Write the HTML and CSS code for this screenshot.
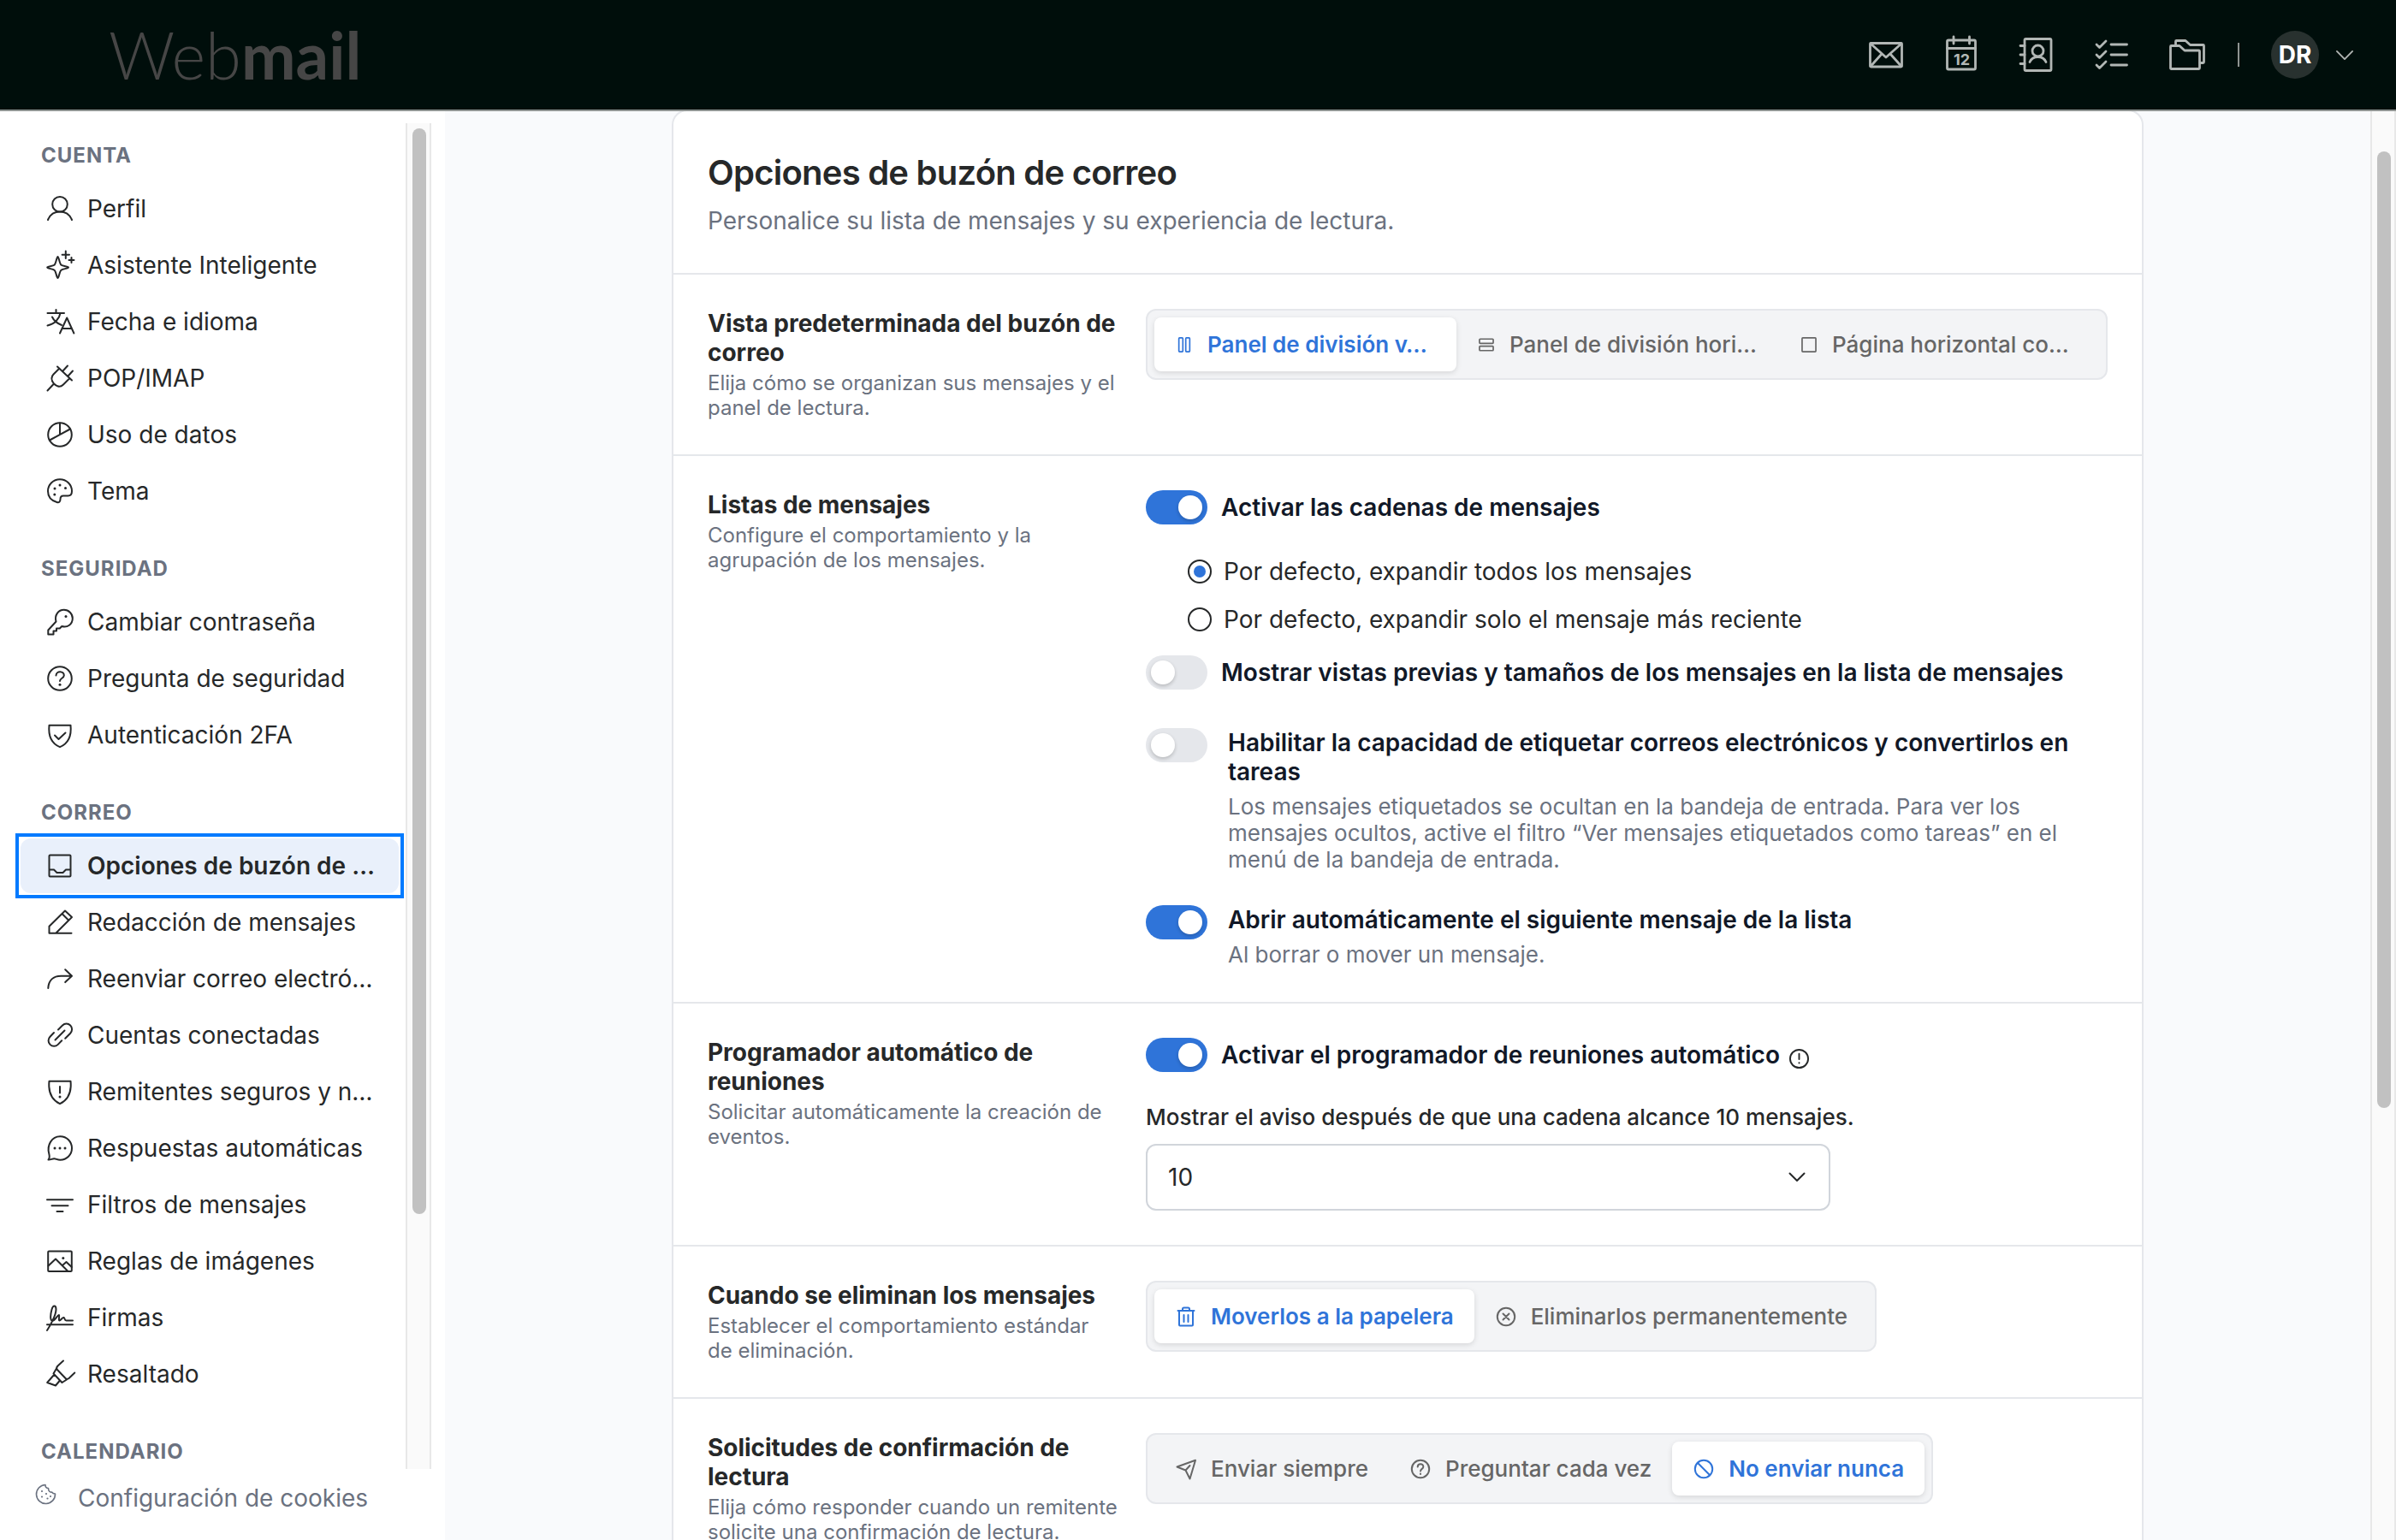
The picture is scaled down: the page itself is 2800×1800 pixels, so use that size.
FILE: index.html
```html
<!DOCTYPE html>
<html lang="es">
<head>
    <meta charset="UTF-8">
    <meta name="viewport" content="width=device-width, initial-scale=1.0">
    <title>Opciones de buzón de correo - Webmail</title>
    <link rel="stylesheet" href="styles.css">
</head>
<body>
    <header class="topbar">
        <div class="logo"><span class="logo-thin">Web</span><span class="logo-bold">mail</span></div>
        <nav class="topnav">
            <svg class="nav-icon" viewBox="0 0 44 44"><rect x="3.5" y="8.5" width="37" height="27.5" rx="1"/><path d="M4 9l18 16L40 9M4 35.5l13-14.500M40 35.500l-13-14.500"/></svg>
            <svg class="nav-icon" viewBox="0 0 44 44"><rect x="5.500" y="5" width="33" height="34" rx="1.500"/><path d="M5.500 14.500h33M13 1v8M31.500 1v8"/><text class="cal-day" x="22.500" y="34">12</text></svg>
            <svg class="nav-icon" viewBox="0 0 44 44"><rect x="8" y="3.500" width="31" height="37" rx="1.500"/><path d="M3 11.500h5M3 22h5M3 32.500h5M14 30.500c2-4.500 5.500-6 9.500-6s7.500 1.500 9.500 6"/><circle cx="23.500" cy="17.500" r="6.500"/></svg>
            <svg class="nav-icon" viewBox="0 0 44 44"><path d="M4 10l3.500 3.500L15 6M4 22l3.500 3.500L15 18M4 34l3.500 3.500L15 30M21 10h18.500M21 22h18.500M21 34h18.500"/></svg>
            <svg class="nav-icon" viewBox="0 0 44 44"><path d="M2.500 37.500V12.500q0-1 1-1H13l6 5.500h16.500q1 0 1 1v19.500q0 1-1 1h-32q-1 0-1-1z"/><path d="M8.500 11V6.500q0-1 1-1H20l5.500 5H40.500q1 0 1 1V30.500q0 1-1 1H37"/></svg>
            <span class="nav-divider"></span>
            <span class="avatar">DR</span>
            <svg class="nav-chevron" viewBox="0 0 22 12"><path d="M1 1l10 10L21 1"/></svg>
        </nav>
    </header>

    <div class="layout">
        <aside class="sidebar">
            <div class="sidebar-scroll">
                <div class="menu">
                    <section class="menu-group">
                        <h2 class="menu-title">CUENTA</h2>
                        <a class="menu-item"><svg viewBox="0 0 32 32"><circle cx="16" cy="10.800" r="8.800"/><path d="M2 29c2.500-6 7.500-9.400 14-9.400S27.500 23 30 29"/></svg><span>Perfil</span></a>
                        <a class="menu-item"><svg viewBox="0 0 32 32"><path d="M13.500 6c1.200 0 2 8.200 4 9.800s8.500 1.200 8.500 2.700-6.500 1.600-8.500 3.200-2.800 9.300-4 9.300-2-7.700-4-9.300S1.200 20 1.200 18.500s6.300-1.100 8.300-2.700 2.800-9.800 4-9.800zM22.800-.5v8.400M18.600 3.700H27M29.500 7v6M26.500 10h6"/></svg><span>Asistente Inteligente</span></a>
                        <a class="menu-item"><svg viewBox="0 0 32 32"><path d="M1.500 6h19.500M11.500 2v4M16.500 6c-1 6-6 12.500-15 14.500M7 10.500c2 4.500 6 7.500 11 9.500M16 29.500l8.200-18 8.200 18M19 24h10.500"/></svg><span>Fecha e idioma</span></a>
                        <a class="menu-item"><svg viewBox="0 0 32 32"><path d="M13 2.500l17 16M15 5l-6.500 6.500c-4.500 4.500-1.500 8.500.5 11 2.500 2.500 6.500 5.500 11 1l7-7M9 22.500L1.500 30.500M20 7l5-5.500M26 13l5-5.500"/></svg><span>POP/IMAP</span></a>
                        <a class="menu-item"><svg viewBox="0 0 32 32"><circle cx="16" cy="16" r="13.800"/><path d="M16 2.500V16M4 22.500l24-13"/></svg><span>Uso de datos</span></a>
                        <a class="menu-item"><svg viewBox="0 0 32 32"><path d="M12.500 29C5.500 27 2 22 2 16 2 8.300 8.300 2.200 16 2.200S30 8.300 30 16c0 3.500-1 5.500-4.500 5.500H20c-3 0-3.500 2-3.500 4s-1 4.300-4 3.500z"/><path class="dots" d="M10 13h.01M16 9h.01M22.500 12.500h.01M9.800 20h.01"/></svg><span>Tema</span></a>
                    </section>
                    <section class="menu-group">
                        <h2 class="menu-title">SEGURIDAD</h2>
                        <a class="menu-item"><svg viewBox="0 0 32 32"><path d="M2.300 25.500L11.500 15.500C9.500 8 14 1.800 20.800 1.800a10 10 0 0 1 10 10c0 7-6 11-12.500 9.200l-2.500 2.500H12v3H8.500v4H2.300z"/><path class="dots" d="M23 9.500h.01"/></svg><span>Cambiar contraseña</span></a>
                        <a class="menu-item"><svg viewBox="0 0 32 32"><circle cx="16" cy="16" r="13.800"/><path d="M11.500 12.500c.3-6 9.500-5.500 9.300 0-.1 3.500-4.800 3-4.800 6.500"/><path class="dots" d="M16 23.300h.01"/></svg><span>Pregunta de seguridad</span></a>
                        <a class="menu-item"><svg viewBox="0 0 32 32"><path d="M3.500 4.700h25c.8 8 .8 20-12.500 25.500C2.700 24.700 2.700 12.700 3.500 4.700zM10 16.500l4.500 4.500 8-7.500"/></svg><span>Autenticación 2FA</span></a>
                    </section>
                    <section class="menu-group">
                        <h2 class="menu-title">CORREO</h2>
                        <a class="menu-item active"><svg viewBox="0 0 32 32"><path d="M3.500 4.500q0-1 1-1h23q1 0 1 1v23q0 1-1 1h-23q-1 0-1-1zM3.500 20.500H9l3.500 3.500h7l3.500-3.500h5.500"/></svg><span>Opciones de buzón de …</span></a>
                        <a class="menu-item"><svg viewBox="0 0 32 32"><path d="M29.500 28.700H3.500v-8L22 2.500 30 10 11.500 28.500M18.500 6l7.800 7.800"/></svg><span>Redacción de mensajes</span></a>
                        <a class="menu-item"><svg viewBox="0 0 32 32"><path d="M2.300 27c.5-9 6-14.300 15-14.300h12.500M22.200 5.300l7.800 7.400-7.800 7.400"/></svg><span>Reenviar correo electró…</span></a>
                        <a class="menu-item"><svg viewBox="0 0 32 32"><path d="M10.500 21.500l11-11M14 9.500l5-5a6.500 6.500 0 0 1 9.200 9.200l-6 6M9 13l-4.500 4.700a6.500 6.500 0 0 0 9.200 9.200l4.500-4.700"/></svg><span>Cuentas conectadas</span></a>
                        <a class="menu-item"><svg viewBox="0 0 32 32"><path d="M3.500 3.700h25c.8 8 .8 20-12.500 26.500C2.700 23.700 2.700 11.700 3.500 3.700zM16 10v7.500"/><path class="dots" d="M16 22h.01"/></svg><span>Remitentes seguros y n…</span></a>
                        <a class="menu-item"><svg viewBox="0 0 32 32"><path d="M2.500 29.500c2-2 1.500-4 .8-7C.5 12.500 6.500 2.200 16.300 2.200 24 2.200 30 8.300 30 16s-6 13.700-13.700 13.700c-3.500 0-4.800-1.500-7-1.500s-4.300 1.600-6.800 1.300z"/><path class="dots" d="M10 16h.01M16 16h.01M22 16h.01"/></svg><span>Respuestas automáticas</span></a>
                        <a class="menu-item"><svg viewBox="0 0 32 32"><path d="M1 10.300h30M6.500 17.300h19M12.500 24h7"/></svg><span>Filtros de mensajes</span></a>
                        <a class="menu-item"><svg viewBox="0 0 32 32"><rect x="2.200" y="4.500" width="27.600" height="23.500" rx="1"/><path d="M2.500 21.500l8.500-8 14 14M19 21l4.500-4 6.300 6"/><path class="dots" d="M19.800 12.500h.01"/></svg><span>Reglas de imágenes</span></a>
                        <a class="menu-item"><svg viewBox="0 0 32 32"><path d="M1 24.300h30M1 31C5 25 11.500 13 11.500 6.500c0-5-3.500-5.500-5 0S4 20 7.500 19.500c3 0 5-6 7.500-6.500.8 1-1 6.500.5 6.500S19 15.500 20.500 16s.5 3.500 3 3.500H31"/></svg><span>Firmas</span></a>
                        <a class="menu-item"><svg viewBox="0 0 32 32"><path d="M20 .5L13.500 6.500Q11.500 8.500 12.500 10.500L23 21.500q2 .8 3.500-.5L33.300 14.500M12 9.500L8.500 15.500 18.500 26 24 22.500M9.500 16.500L1.200 26l9.800 3.500L16 23.500"/></svg><span>Resaltado</span></a>
                    </section>
                    <section class="menu-group">
                        <h2 class="menu-title">CALENDARIO</h2>
                    </section>
                </div>
                <div class="scroll-track"><div class="scroll-thumb"></div></div>
            </div>
            <div class="cookies">
                <svg viewBox="0 0 24 24"><path d="M11 1.500c0 3 1.500 4 3.500 4 0 3.500 2 5 4 4.500 1 1.500 2.500 2 4 2a11 11 0 1 1-11.500-10.500z"/><path class="dots" d="M7 9h.01M12 12h.01M7 15.500h.01M13.500 17.500h.01M17 15h.01"/></svg>
                <span>Configuración de cookies</span>
            </div>
        </aside>

        <main class="content">
            <div class="card">
                <div class="card-header">
                    <h1>Opciones de buzón de correo</h1>
                    <p>Personalice su lista de mensajes y su experiencia de lectura.</p>
                </div>

                <section class="setting">
                    <div class="setting-info">
                        <h3>Vista predeterminada del buzón de correo</h3>
                        <p>Elija cómo se organizan sus mensajes y el panel de lectura.</p>
                    </div>
                    <div class="setting-body">
                        <div class="segmented view-mode">
                            <button class="segment selected seg-vertical"><svg viewBox="0 0 26 26"><rect x="5.500" y="3.500" width="5.500" height="19" rx="1"/><rect x="15" y="3.500" width="5.500" height="19" rx="1"/></svg><span>Panel de división v…</span></button>
                            <button class="segment seg-horizontal"><svg viewBox="0 0 26 26"><rect x="3.500" y="5" width="19" height="6" rx="1"/><rect x="3.500" y="15" width="19" height="6" rx="1"/></svg><span>Panel de división hori…</span></button>
                            <button class="segment seg-page"><svg viewBox="0 0 26 26"><rect x="3.500" y="3.500" width="19" height="19" rx="1"/></svg><span>Página horizontal co…</span></button>
                        </div>
                    </div>
                </section>

                <section class="setting">
                    <div class="setting-info">
                        <h3>Listas de mensajes</h3>
                        <p>Configure el comportamiento y la agrupación de los mensajes.</p>
                    </div>
                    <div class="setting-body">
                        <div class="toggle-row">
                            <span class="toggle on"></span>
                            <span class="toggle-label">Activar las cadenas de mensajes</span>
                        </div>
                        <div class="radio-list">
                            <div class="radio-row"><span class="radio checked"></span><span>Por defecto, expandir todos los mensajes</span></div>
                            <div class="radio-row"><span class="radio"></span><span>Por defecto, expandir solo el mensaje más reciente</span></div>
                        </div>
                        <div class="toggle-row">
                            <span class="toggle"></span>
                            <span class="toggle-label">Mostrar vistas previas y tamaños de los mensajes en la lista de mensajes</span>
                        </div>
                        <div class="toggle-row detailed tags">
                            <span class="toggle"></span>
                            <div class="toggle-text">
                                <div class="toggle-label">Habilitar la capacidad de etiquetar correos electrónicos y convertirlos en tareas</div>
                                <p>Los mensajes etiquetados se ocultan en la bandeja de entrada. Para ver los mensajes ocultos, active el filtro “Ver mensajes etiquetados como tareas” en el menú de la bandeja de entrada.</p>
                            </div>
                        </div>
                        <div class="toggle-row detailed">
                            <span class="toggle on"></span>
                            <div class="toggle-text">
                                <div class="toggle-label">Abrir automáticamente el siguiente mensaje de la lista</div>
                                <p>Al borrar o mover un mensaje.</p>
                            </div>
                        </div>
                    </div>
                </section>

                <section class="setting">
                    <div class="setting-info">
                        <h3>Programador automático de reuniones</h3>
                        <p>Solicitar automáticamente la creación de eventos.</p>
                    </div>
                    <div class="setting-body">
                        <div class="toggle-row">
                            <span class="toggle on"></span>
                            <span class="toggle-label">Activar el programador de reuniones automático</span>
                            <svg class="info-icon" viewBox="0 0 24 24"><circle cx="12" cy="12" r="11"/><path d="M12 6v6.500M12 16.800v.4"/></svg>
                        </div>
                        <div class="field-label">Mostrar el aviso después de que una cadena alcance 10 mensajes.</div>
                        <div class="select-box">
                            <span>10</span>
                            <svg viewBox="0 0 20 12"><path d="M1.500 1.500l8.500 8.500 8.500-8.500"/></svg>
                        </div>
                    </div>
                </section>

                <section class="setting">
                    <div class="setting-info">
                        <h3>Cuando se eliminan los mensajes</h3>
                        <p>Establecer el comportamiento estándar de eliminación.</p>
                    </div>
                    <div class="setting-body">
                        <div class="segmented">
                            <button class="segment selected"><svg viewBox="0 0 26 26"><path d="M3.500 6h19M9 6V4q0-1.500 1.500-1.500h5Q17 2.500 17 4v2M5 6v16.500q0 1 1 1h14q1 0 1-1V6M10.500 11v8M15.500 11v8"/></svg><span>Moverlos a la papelera</span></button>
                            <button class="segment"><svg viewBox="0 0 26 26"><circle cx="13" cy="13" r="10.200"/><path d="M9.500 9.500l7 7M16.500 9.500l-7 7"/></svg><span>Eliminarlos permanentemente</span></button>
                        </div>
                    </div>
                </section>

                <section class="setting">
                    <div class="setting-info">
                        <h3>Solicitudes de confirmación de lectura</h3>
                        <p>Elija cómo responder cuando un remitente solicite una confirmación de lectura.</p>
                    </div>
                    <div class="setting-body">
                        <div class="segmented">
                            <button class="segment"><svg viewBox="0 0 26 26"><path d="M2.500 10.500L24 2.800 17.500 24.500 12.500 14.500zM12.500 14.500L17.500 9"/></svg><span>Enviar siempre</span></button>
                            <button class="segment"><svg viewBox="0 0 26 26"><circle cx="13" cy="13" r="10.200"/><path d="M9.700 10.500c.2-4.500 6.800-4.200 6.600 0-.1 2.500-3.300 2.300-3.300 5M13 18.500v.4"/></svg><span>Preguntar cada vez</span></button>
                            <button class="segment selected"><svg viewBox="0 0 26 26"><circle cx="13" cy="13" r="10.200"/><path d="M5.800 5.800l14.400 14.400"/></svg><span>No enviar nunca</span></button>
                        </div>
                    </div>
                </section>
            </div>
        </main>
        <div class="page-track"><div class="page-thumb"></div></div>
    </div>
</body>
</html>
```
FILE: styles.css
```css
* {
    margin: 0;
    padding: 0;
    box-sizing: border-box;
}

body {
    width: 2800px;
    height: 1800px;
    overflow: hidden;
    font-family: Inter, "Liberation Sans", sans-serif;
    font-size: 28px;
    color: #262829;
    background: #f9fafc;
    display: flex;
    flex-direction: column;
}

svg {
    fill: none;
    stroke: currentColor;
    stroke-width: 2;
    stroke-linecap: round;
    stroke-linejoin: round;
    flex-shrink: 0;
    overflow: visible;
}

svg .dots {
    stroke-width: 3;
}

/* Top bar */
.topbar {
    height: 130px;
    flex-shrink: 0;
    background: #000e0b;
    border-bottom: 2px solid #8f9492;
    display: flex;
    align-items: center;
    justify-content: space-between;
    padding: 0 50px 0 127px;
}

.logo {
    font-family: Lato, "Open Sans", sans-serif;
    font-size: 76px;
    line-height: 90px;
    color: #464646;
    white-space: nowrap;
}

.logo-thin {
    font-weight: 300;
}

.logo-bold {
    font-weight: 700;
}

.topnav {
    display: flex;
    align-items: center;
    color: #b2b7b5;
}

.nav-icon {
    width: 44px;
    height: 44px;
    margin-right: 44px;
    stroke-width: 2.8;
}

.cal-day {
    font-size: 18px;
    font-weight: 700;
    text-anchor: middle;
    fill: currentColor;
    stroke: none;
}

.nav-divider {
    width: 2px;
    height: 28px;
    background: #8f9492;
    margin-right: 37px;
    margin-left: -7px;
}

.avatar {
    width: 56px;
    height: 56px;
    border-radius: 50%;
    background: #28312f;
    color: #fff;
    font-weight: 700;
    display: flex;
    align-items: center;
    justify-content: center;
    margin-right: 20px;
}

.nav-chevron {
    width: 20px;
    height: 11px;
}

/* Sidebar */
.layout {
    flex: 1;
    min-height: 0;
    display: flex;
}

.sidebar {
    width: 520px;
    flex-shrink: 0;
    background: #fff;
    display: flex;
    flex-direction: column;
}

.sidebar-scroll {
    height: 1587px;
    padding-top: 14px;
    display: flex;
}

.menu {
    width: 474px;
    padding: 20px 8px 0 24px;
    height: 1573px;
    overflow: hidden;
}

.menu-group {
    display: flex;
    flex-direction: column;
    gap: 2px;
    margin-bottom: 41px;
}

.menu-title {
    font-size: 24px;
    font-weight: 700;
    line-height: 36px;
    letter-spacing: 1px;
    color: #6b7280;
    padding-left: 24px;
    margin-bottom: 10px;
}

.menu-item {
    position: relative;
    height: 64px;
    flex-shrink: 0;
    display: flex;
    align-items: center;
    gap: 16px;
    padding: 0 30px;
    white-space: nowrap;
}

.menu-item svg {
    width: 32px;
    height: 32px;
}

/* square focus ring around a rounded highlight */
.menu-item.active {
    z-index: 0;
    font-weight: 600;
    outline: 4px solid #007aff;
    outline-offset: 2px;
}

.menu-item.active::before {
    content: '';
    position: absolute;
    inset: 0;
    z-index: -1;
    border-radius: 12px;
    background: #e9f0fb;
}

.scroll-track {
    width: 30px;
    background: #fafafa;
    border: solid #e8e8e8;
    border-width: 0 2px;
    padding: 6px 4px 0 6px;
}

.scroll-thumb {
    height: 1269px;
    border-radius: 8px;
    background: #c1c1c1;
}

.cookies {
    display: flex;
    padding: 17px 0 0 42px;
    gap: 25px;
    color: #6b7280;
    line-height: 34px;
}

.cookies svg {
    width: 24px;
    height: 24px;
    stroke-width: 1.6;
}

.cookies .dots {
    stroke-width: 2.2;
}

/* Settings card */
.content {
    flex: 1;
    overflow: hidden;
    display: flex;
    justify-content: center;
    align-items: flex-start;
}

.card {
    width: 1720px;
    margin-top: -2px;
    background: #fff;
    border: 2px solid #e5e7eb;
    border-radius: 18px;
}

.card-header {
    height: 191px;
    padding: 48px 40px 0;
    border-bottom: 2px solid #e5e7eb;
}

.card-header h1 {
    font-size: 40px;
    font-weight: 600;
    line-height: 48px;
    letter-spacing: -0.76px;
    margin-bottom: 15px;
}

.card-header p {
    line-height: 34px;
    color: #6b7280;
}

.setting {
    display: grid;
    grid-template-columns: 480px 1124px;
    gap: 32px;
    padding: 40px;
    border-bottom: 2px solid #e5e7eb;
}

.setting:last-child {
    border-bottom: none;
}

.setting-info h3 {
    font-size: 28px;
    font-weight: 700;
    line-height: 34px;
    letter-spacing: -0.02px;
}

.setting-info p {
    margin-top: 4px;
    font-size: 24px;
    line-height: 29px;
    color: #6b7280;
}

.setting-info {
    min-height: 96px;
}

.segmented {
    display: inline-flex;
    vertical-align: top;
    height: 83px;
    padding: 8px;
    background: #f3f4f6;
    border: 2px solid #e5e7eb;
    border-radius: 12px;
}

.segment {
    display: flex;
    align-items: center;
    gap: 16px;
    padding: 0 24px;
    border: none;
    border-radius: 8px;
    background: none;
    font-family: inherit;
    font-size: 26px;
    font-weight: 500;
    color: #666;
    white-space: nowrap;
}

.segment svg {
    width: 26px;
    height: 26px;
}

.segment.selected {
    background: #fff;
    color: #2f74d9;
    font-weight: 600;
    box-shadow: 0 2px 6px rgba(0, 0, 0, 0.12);
}

.view-mode svg {
    width: 22px;
    height: 22px;
}

.seg-vertical {
    width: 353px;
}

.seg-horizontal {
    width: 377px;
}

.seg-page {
    width: 374px;
}

.toggle-row {
    display: flex;
    align-items: center;
    gap: 16px;
    min-height: 40px;
}

.toggle {
    width: 72px;
    height: 40px;
    flex-shrink: 0;
    border-radius: 20px;
    background: #e5e7eb;
    padding: 6px;
    display: flex;
}

.toggle::before {
    content: '';
    width: 28px;
    height: 28px;
    border-radius: 50%;
    background: #fff;
    box-shadow: 0 2px 4px rgba(0, 0, 0, 0.2);
}

.toggle.on {
    background: #2f74d9;
    justify-content: flex-end;
}

.toggle-label {
    font-weight: 600;
    line-height: 34px;
    color: #111827;
}

.toggle-row.detailed {
    align-items: flex-start;
    gap: 24px;
}

.toggle-row.tags {
    margin: 45px 0 38px;
}

.toggle-text p {
    margin-top: 8px;
    font-size: 26px;
    line-height: 31px;
    color: #6b7280;
}

.radio-list {
    display: flex;
    flex-direction: column;
    gap: 28px;
    padding: 41px 0 28px 49px;
}

.radio-row {
    display: flex;
    align-items: center;
    gap: 14px;
    height: 28px;
}

.radio {
    width: 28px;
    height: 28px;
    border: 2px solid #262829;
    border-radius: 50%;
    display: flex;
    align-items: center;
    justify-content: center;
}

.radio.checked::before {
    content: '';
    width: 14px;
    height: 14px;
    border-radius: 50%;
    background: #2f74d9;
}

.info-icon {
    width: 23px;
    height: 23px;
    margin: 8px 0 0 -5px;
}

.field-label {
    margin-top: 37px;
    font-size: 26px;
    font-weight: 500;
    line-height: 32px;
}

.select-box {
    width: 800px;
    height: 78px;
    margin-top: 15px;
    padding: 0 27px 0 24px;
    border: 2px solid #d1d5db;
    border-radius: 12px;
    display: flex;
    align-items: center;
    justify-content: space-between;
}

.select-box svg {
    width: 20px;
    height: 12px;
}

/* Page scrollbar */
.page-track {
    width: 30px;
    flex-shrink: 0;
    background: #fafafa;
    border: solid #e8e8e8;
    border-width: 0 2px;
    padding: 47px 4px 0 6px;
}

.page-thumb {
    width: 16px;
    height: 1118px;
    border-radius: 8px;
    background: #c1c1c1;
}
```
